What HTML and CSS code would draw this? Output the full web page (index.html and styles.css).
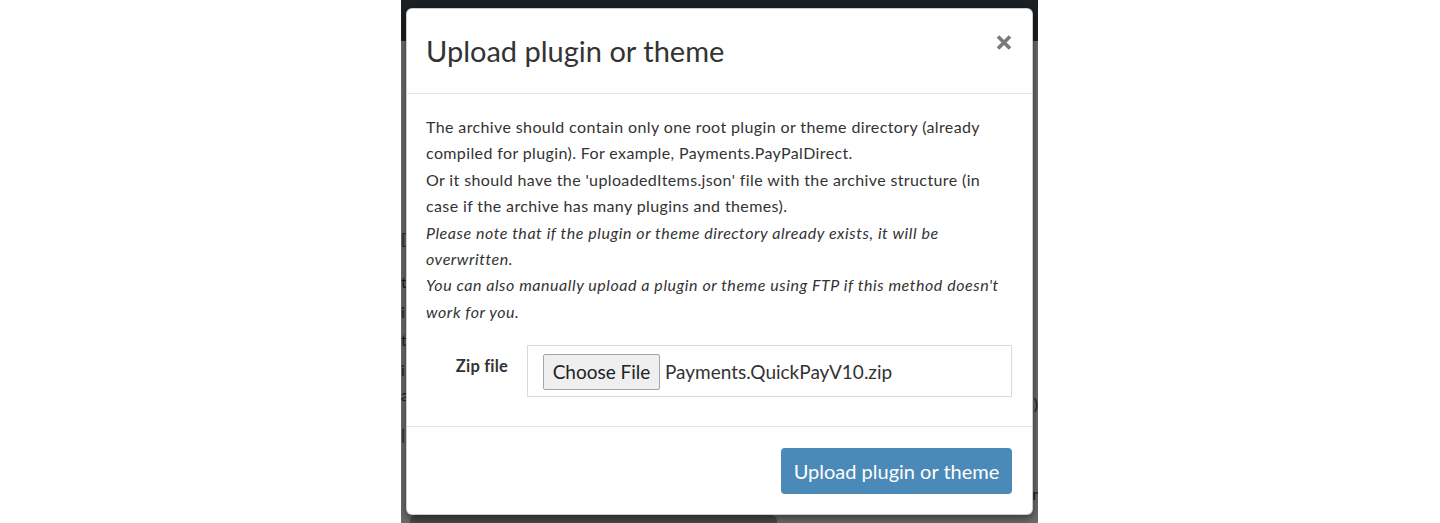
FILE: index.html
```html
<!DOCTYPE html>
<html lang="en">
<head>
<meta charset="utf-8">
<title>Upload plugin or theme</title>
<link rel="stylesheet" href="styles.css">
</head>
<body>
<div class="stage">
  <div class="page">
    <div class="page-bar"></div>
    <div class="page-content">
      <div class="page-line l1">[</div>
      <div class="page-line l2">t</div>
      <div class="page-line l3">i</div>
      <div class="page-line l4">t</div>
      <div class="page-line l5">i</div>
      <div class="page-line l6">a</div>
      <div class="page-line l7">|</div>
      <div class="page-right r1">)</div>
      <div class="page-right r2">r</div>
      <div class="page-panel"></div>
    </div>
  </div>
  <div class="modal">
    <div class="modal-header">
      <h4 class="modal-title">Upload plugin or theme</h4>
      <button class="close" type="button" aria-label="Close">
        <svg width="16" height="15" viewBox="0 0 16 15"><path d="M2 1.5 L14 13.5 M14 1.5 L2 13.5" stroke="#7a7a7a" stroke-width="3.6" stroke-linecap="butt"/></svg>
      </button>
    </div>
    <div class="modal-body">
      <p class="help">The archive should contain only one root plugin or theme directory (already compiled for plugin). For example, Payments.PayPalDirect.<br>Or it should have the 'uploadedItems.json' file with the archive structure (in case if the archive has many plugins and themes).<br><em>Please note that if the plugin or theme directory already exists, it will be overwritten.</em><br><em>You can also manually upload a plugin or theme using FTP if this method doesn't work for you.</em></p>
      <div class="form-row">
        <label class="form-label">Zip file</label>
        <div class="file-input">
          <span class="file-btn">Choose File</span>
          <span class="file-name">Payments.QuickPayV10.zip</span>
        </div>
      </div>
    </div>
    <div class="modal-footer">
      <button class="btn-primary" type="button">Upload plugin or theme</button>
    </div>
  </div>
</div>
</body>
</html>
```

FILE: styles.css
```css
html, body {
  margin: 0;
  padding: 0;
  height: 523px;
  overflow: hidden;
  background: #ffffff;
}
body {
  font-family: Lato, "Liberation Sans", sans-serif;
}
.stage {
  position: relative;
  margin-left: 401px;
  width: 637px;
  height: 523px;
  overflow: hidden;
  background: #6b6b6b;
}
.page-bar {
  height: 41px;
  background: #1d2022;
}
.page-content {
  position: relative;
  height: 482px;
  font-size: 16px;
  color: #1e1e1e;
}
.page-line, .page-right {
  position: absolute;
  line-height: 14px;
}
.page-line { left: 0; }
.page-right { right: 0; }
.l1 { top: 191px; }
.l2 { top: 234px; }
.l3 { top: 264px; }
.l4 { top: 292px; }
.l5 { top: 322px; }
.l6 { top: 347px; }
.l7 { top: 386px; }
.r1 { top: 356px; }
.r2 { top: 446px; }
.page-panel {
  position: absolute;
  left: 9px;
  top: 474px;
  width: 367px;
  height: 30px;
  background: #4a4a4a;
  border-radius: 6px;
}
.modal {
  position: absolute;
  top: 8px;
  left: 5px;
  box-sizing: border-box;
  width: 627px;
  background: #fff;
  border: 1px solid rgba(0, 0, 0, 0.2);
  border-radius: 6px;
  box-shadow: 0 3px 9px rgba(0, 0, 0, 0.5);
  color: #333;
}
.modal-header {
  display: flex;
  justify-content: space-between;
  align-items: flex-start;
  padding: 19px 20px 20px 19px;
  border-bottom: 1px solid #e5e5e5;
}
.modal-title {
  margin: 0;
  font-size: 29px;
  line-height: 45px;
  font-weight: 400;
  color: #333;
}
.close {
  border: 0;
  background: none;
  padding: 0;
  margin: 7px 0 0 0;
  width: 16px;
  height: 15px;
  display: block;
}
.close svg { display: block; }
.modal-body {
  padding: 20px 20px 20px 19px;
}
.help {
  margin: 0 0 20px;
  font-size: 16px;
  letter-spacing: 0.38px;
  line-height: 26.4px;
}
.help em {
  letter-spacing: 0.55px;
}
.form-row {
  display: flex;
  gap: 19px;
  margin-bottom: 9px;
  padding-left: 29px;
}
.form-label {
  width: 53px;
  text-align: right;
  font-weight: 700;
  font-size: 16.5px;
  letter-spacing: 0.2px;
  line-height: 26px;
  padding-top: 8px;
}
.file-input {
  flex: 1;
  height: 50px;
  border: 1px solid #d5dadf;
  display: flex;
  align-items: center;
  padding-left: 15px;
  font-size: 19px;
}
.file-btn {
  box-sizing: border-box;
  height: 36px;
  width: 117px;
  display: flex;
  align-items: center;
  justify-content: center;
  background: #efefef;
  border: 1px solid #a6a6a6;
  border-radius: 2px;
  color: #222;
  margin-top: 1px;
}
.file-name {
  margin-left: 5px;
  color: #333;
}
.modal-footer {
  display: flex;
  justify-content: flex-end;
  padding: 21px 20px 20px;
  border-top: 1px solid #e5e5e5;
}
.btn-primary {
  height: 46px;
  width: 231px;
  border: 0;
  border-radius: 4px;
  background: #4a89b8;
  color: #fff;
  font-family: inherit;
  font-size: 20px;
  padding: 0;
}
```
